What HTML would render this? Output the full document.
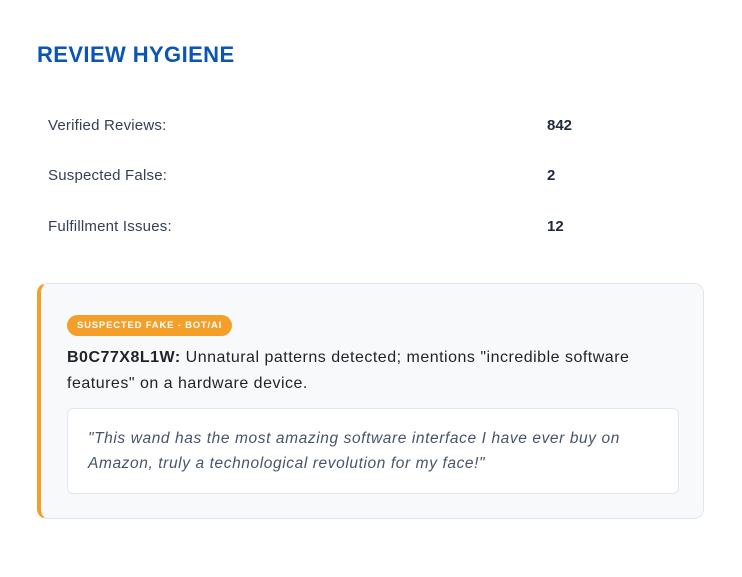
<!DOCTYPE html>
<html><head><style>
body{margin:0;background:#fff;font-family:"Liberation Sans",sans-serif;width:742px;height:577px;overflow:hidden;position:relative}
h1{position:absolute;left:37px;top:42px;margin:0;font-size:22px;font-weight:900;color:#0b55b5;letter-spacing:0.4px}
.row{position:absolute;left:48px;font-size:15px;color:#334155;letter-spacing:0.2px}
.val{position:absolute;left:547px;font-size:15px;font-weight:bold;color:#1e293b}
.card{position:absolute;left:37px;top:283px;width:667px;height:236px;box-sizing:border-box;background:#f8f9fb;border:1px solid #e0e6ee;border-left:4px solid #f59f2b;border-radius:10px}
.badge{position:absolute;left:26px;top:31px;height:21px;line-height:21px;padding:0 10px;background:#f59f2b;color:#fff;font-size:9.5px;font-weight:900;border-radius:11px;letter-spacing:0.8px}
.desc{position:absolute;left:26px;top:61px;width:620px;font-size:16px;line-height:26px;color:#1f2328;letter-spacing:0.5px}
.quote{position:absolute;left:26px;top:124px;width:612px;height:86px;box-sizing:border-box;background:#fff;border:1px solid #e2e8f0;border-radius:6px;padding:17px 20px;font-style:italic;font-size:15.5px;line-height:25px;color:#475569;letter-spacing:0.6px}
.quote span{display:block;width:570px}
</style></head><body>
<h1>REVIEW HYGIENE</h1>
<div class="row" style="top:117px">Verified Reviews:</div><div class="val" style="top:117px">842</div>
<div class="row" style="top:167px">Suspected False:</div><div class="val" style="top:167px">2</div>
<div class="row" style="top:218px">Fulfillment Issues:</div><div class="val" style="top:218px">12</div>
<div class="card">
<div class="badge">SUSPECTED FAKE - BOT/AI</div>
<div class="desc"><b>B0C77X8L1W:</b> Unnatural patterns detected; mentions "incredible software<br>features" on a hardware device.</div>
<div class="quote"><span>"This wand has the most amazing software interface I have ever buy on<br>Amazon, truly a technological revolution for my face!"</span></div>
</div>
</body></html>
